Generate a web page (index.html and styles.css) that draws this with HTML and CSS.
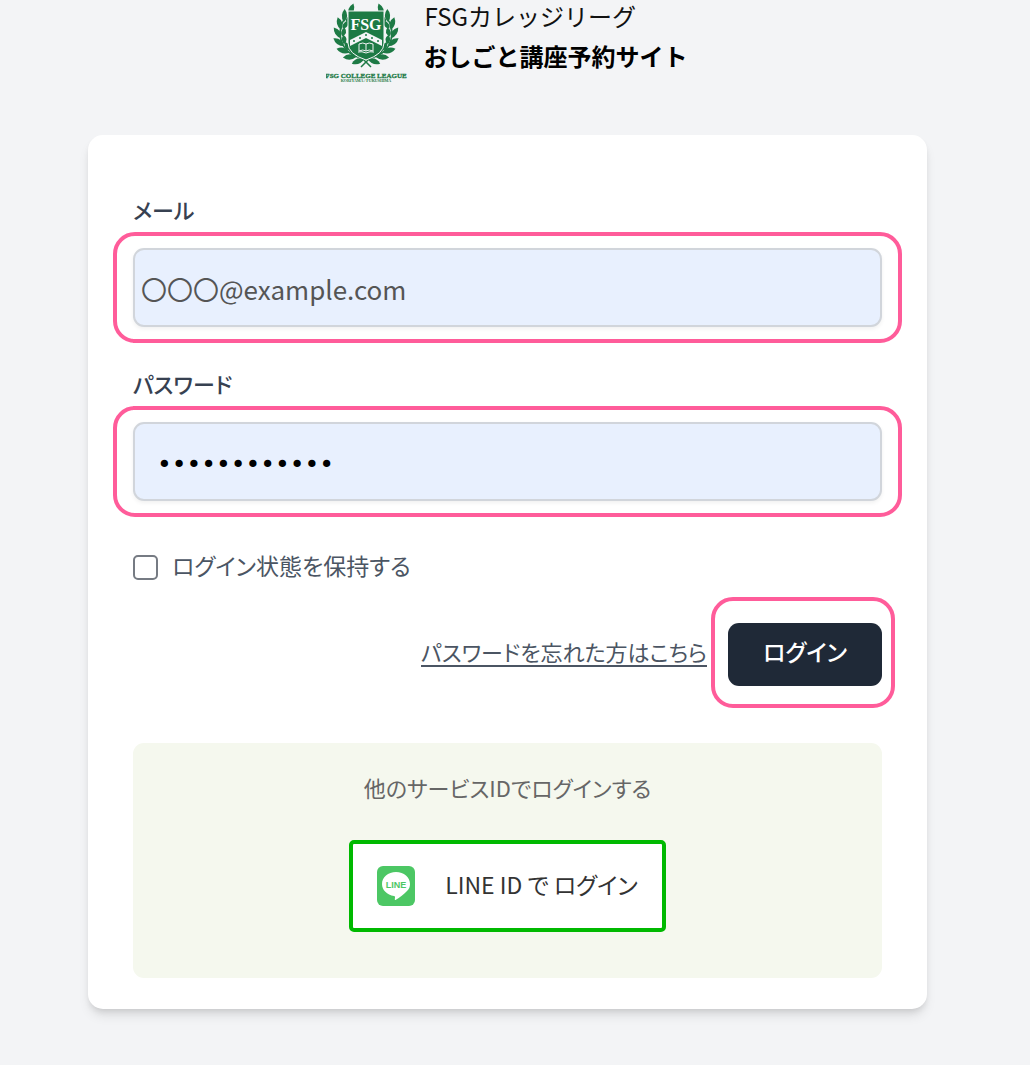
FILE: index.html
```html
<!DOCTYPE html>
<html lang="ja">
   <head>
      <meta charset="utf-8">
      <meta name="viewport" content="width=device-width, initial-scale=1">
      <title>おしごと講座予約サイト</title>
      <link rel="stylesheet" href="styles.css">
   </head>
   <body>
      <header class="site-header">
         <svg class="logo" width="82" height="84" viewBox="0 0 82 84" role="img" aria-label="FSG COLLEGE LEAGUE">
            <defs>
               <g id="leaf">
                  <path d="M41 59 Q37 66.500 29 65 Q32 57 41 59Z"/>
                  <path d="M39 58 Q35 60.500 30 54.500 Q37 51 39 58Z"/>
               </g>
               <g id="branch">
                  <use href="#leaf" transform="rotate(6 40 34)"/>
                  <use href="#leaf" transform="rotate(25 40 34)"/>
                  <use href="#leaf" transform="rotate(44 40 34)"/>
                  <use href="#leaf" transform="rotate(63 40 34)"/>
                  <use href="#leaf" transform="rotate(82 40 34)"/>
                  <use href="#leaf" transform="rotate(101 40 34)"/>
                  <use href="#leaf" transform="rotate(120 40 34)"/>
                  <use href="#leaf" transform="rotate(138 40 34)"/>
                  <path d="M45 67 L36 58 A25 25 0 0 1 20 17" fill="none" stroke="#1d7a45" stroke-width="1.500"/>
               </g>
            </defs>
            <g fill="#1d7a45">
               <use href="#branch"/>
               <use href="#branch" transform="translate(80 0) scale(-1 1)"/>
               <path d="M22 11 H58 V43 Q58 54 40 60 Q22 54 22 43Z" stroke="#f3f4f6" stroke-width="1"/>
            </g>
            <path d="M24 40 L40 32 L56 40 V46 L40 38 L24 46Z" fill="#f3f4f6"/>
            <g fill="#1d7a45">
               <circle cx="28" cy="41" r="1"/>
               <circle cx="34" cy="38" r="1"/>
               <circle cx="40" cy="35" r="1"/>
               <circle cx="46" cy="38" r="1"/>
               <circle cx="52" cy="41" r="1"/>
            </g>
            <path d="M33 44 Q37 42 40 44 Q43 42 47 44 V51 Q43 49 40 51 Q37 49 33 51Z M40 44 V51 M32 52 Q36 51 40 53 Q44 51 48 52" fill="none" stroke="#f3f4f6" stroke-width="1"/>
            <text class="logo-mark" x="40" y="30" text-anchor="middle">FSG</text>
            <text class="logo-name" x="40" y="78" text-anchor="middle">FSG COLLEGE LEAGUE</text>
            <text class="logo-area" x="40" y="82" text-anchor="middle">KORIYAMA / FUKUSHIMA</text>
         </svg>
         <div class="site-name">
            <p class="site-group">FSGカレッジリーグ</p>
            <h1 class="site-title">おしごと講座予約サイト</h1>
         </div>
      </header>
      <main class="card">
         <form onsubmit="return false">
            <div class="field">
               <label class="field-label" for="email">メール</label>
               <div class="marker">
                  <input class="text-input" id="email" type="text" name="email" value="〇〇〇@example.com">
               </div>
            </div>
            <div class="field">
               <label class="field-label" for="password">パスワード</label>
               <div class="marker">
                  <input class="text-input password" id="password" type="password" name="password" value="abcdefghijkl">
               </div>
            </div>
            <label class="remember" for="remember">
               <input class="checkbox" id="remember" type="checkbox" name="remember">
               <span class="text">ログイン状態を保持する</span>
            </label>
            <div class="actions">
               <a class="forgot text" href="#">パスワードを忘れた方はこちら</a>
               <div class="marker marker-button">
                  <button class="login" type="submit">ログイン</button>
               </div>
            </div>
         </form>
         <section class="social">
            <p class="social-title text">他のサービスIDでログインする</p>
            <a class="line-login" href="#">
               <svg width="38" height="40" viewBox="0 0 38 40" aria-hidden="true">
                  <rect width="38" height="40" rx="6" fill="#4cc764"/>
                  <path d="M19 6 C27 6 33 11 33 18 C33 21 32 23 30 25 C27 28.500 22 32 18.500 34 C17.500 34.500 17.800 33 18 31.500 C18.100 30.500 18 30 17 29.900 C10 29 5 24 5 18 C5 11 11 6 19 6Z" fill="#fff"/>
                  <text class="line-mark" x="19" y="22" text-anchor="middle">LINE</text>
               </svg>
               <span class="text">LINE ID で ログイン</span>
            </a>
         </section>
      </main>
   </body>
</html>
```
FILE: styles.css
```css
* {
box-sizing: border-box;
}
body {
margin: 0;
padding: 0 15px 56px 0;
background-color: #f3f4f6;
font-family: "Noto Sans CJK JP", sans-serif;
font-size: 23px;
line-height: 36px;
font-feature-settings: "palt";
color: #4b5563;
}
p, h1 {
margin: 0;
}
.site-header {
display: flex;
justify-content: center;
gap: 16px;
height: 135px;
padding-right: 2px;
font-feature-settings: normal;
color: #111;
}
.site-name {
display: flex;
flex-direction: column;
gap: 8px;
}
.site-group, .site-title {
font-size: 24px;
line-height: 32px;
}
.site-group {
padding-left: 1px;
}
.site-title {
font-weight: bold;
color: #000;
}
.logo-mark {
font: bold 16px "Liberation Serif", serif;
fill: #fff;
}
.logo-name {
font: bold 7px "Liberation Serif", serif;
fill: #1d7a45;
stroke: #1d7a45;
stroke-width: 0.3px;
}
.logo-area {
font: bold 4px "Liberation Serif", serif;
fill: #1d7a45;
}
.card {
margin: 0 88px;
padding: 58px 45px 31px;
border-radius: 15px;
background-color: #fff;
box-shadow: 0 8px 12px -2px rgba(0,0,0,0.1), 0 4px 6px -2px rgba(0,0,0,0.1);
}
.field {
margin-bottom: 24px;
}
.field-label {
display: block;
margin-bottom: 7px;
font-size: 22px;
line-height: 32px;
font-weight: 500;
color: #374151;
}
/* pink frame around the parts to fill in */
.marker {
margin: 0 -20px;
padding: 12px 16px;
border: 4px solid #ff5c9a;
border-radius: 22px;
}
.text-input {
display: block;
width: 100%;
height: 79px;
padding: 2px 6px 0;
border: 2px solid #d1d5db;
border-radius: 11px;
background-color: #e8f0fe;
box-shadow: 0 2px 4px rgba(0,0,0,0.06);
font-family: inherit;
font-size: 26px;
color: #555;
}
.text-input.password {
padding: 6px 22px 0;
font-family: "DejaVu Sans", sans-serif;
font-size: 25px;
color: #000;
}
.remember {
display: flex;
align-items: center;
gap: 14px;
margin-top: 32px;
}
.text {
padding-bottom: 4px;
line-height: 32px;
}
.checkbox {
appearance: none;
width: 25px;
height: 25px;
margin: 0;
border: 2px solid #767b83;
border-radius: 5px;
background-color: #fff;
}
.checkbox:checked {
background-color: #1f2937;
}
.actions {
display: flex;
justify-content: flex-end;
align-items: center;
gap: 4px;
margin-top: 12px;
}
.forgot {
font-size: 22px;
color: #4b5563;
text-decoration: underline;
text-decoration-thickness: 2px;
text-underline-offset: 4px;
}
.marker-button {
margin: 0 -13px 0 0;
padding: 22px 9px 18px 13px;
}
.login {
display: block;
padding: 0 32px 8px;
height: 63px;
min-width: 154px;
border: 0;
border-radius: 11px;
background-color: #1f2937;
font-family: inherit;
font-feature-settings: inherit;
font-size: 23px;
font-weight: 500;
color: #fff;
cursor: pointer;
}
.social {
display: flex;
flex-direction: column;
align-items: center;
gap: 33px;
margin-top: 35px;
padding: 28px 20px 46px;
border-radius: 11px;
background-color: #f5f8ee;
color: #666;
}
.social-title {
font-size: 22px;
}
.line-login {
display: flex;
align-items: center;
gap: 30px;
padding: 22px 24px;
border: 4px solid #00b900;
border-radius: 5px;
background-color: #fff;
color: #333;
text-decoration: none;
}
.line-mark {
font: bold 9px "Liberation Sans", sans-serif;
fill: #4cc764;
}
```
